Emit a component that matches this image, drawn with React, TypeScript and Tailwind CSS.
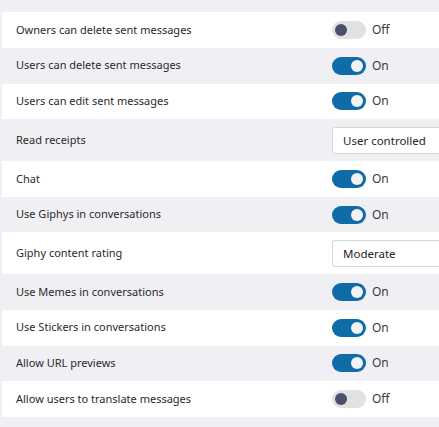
type Row =
  | { label: string; kind: 'toggle'; on: boolean }
  | { label: string; kind: 'select'; value: string }

const rows: Row[] = [
  { label: 'Owners can delete sent messages', kind: 'toggle', on: false },
  { label: 'Users can delete sent messages', kind: 'toggle', on: true },
  { label: 'Users can edit sent messages', kind: 'toggle', on: true },
  { label: 'Read receipts', kind: 'select', value: 'User controlled' },
  { label: 'Chat', kind: 'toggle', on: true },
  { label: 'Use Giphys in conversations', kind: 'toggle', on: true },
  { label: 'Giphy content rating', kind: 'select', value: 'Moderate' },
  { label: 'Use Memes in conversations', kind: 'toggle', on: true },
  { label: 'Use Stickers in conversations', kind: 'toggle', on: true },
  { label: 'Allow URL previews', kind: 'toggle', on: true },
  { label: 'Allow users to translate messages', kind: 'toggle', on: false },
]

function Toggle({ on }: { on: boolean }) {
  return (
    <div className="flex items-center">
      {on ? (
        <div className="flex h-[18px] w-[34px] items-center justify-end rounded-full bg-[#0f6ca9] px-[3px]">
          <div className="h-[12px] w-[12px] rounded-full bg-[#f3f3f5]" />
        </div>
      ) : (
        <div className="flex h-[18px] w-[34px] items-center justify-start rounded-full bg-[#e1e1e1] px-[3px]">
          <div className="h-[12px] w-[12px] rounded-full bg-[#4a5068]" />
        </div>
      )}
      <span className="ml-[6px] text-[12px] text-[#3b3a39]">{on ? 'On' : 'Off'}</span>
    </div>
  )
}

export default function App() {
  return (
    <div
      className="min-h-[427px] w-[439px] overflow-hidden bg-[#f0f0f4] pt-[12px] pl-[2px]"
      style={{ fontFamily: '"Noto Sans", "Open Sans", sans-serif' }}
    >
      {rows.map((row, i) => (
        <div
          key={row.label}
          className={`flex items-center ${i % 2 === 0 ? 'bg-white' : 'bg-[#f0f0f4]'} ${row.kind === 'select' ? 'h-[41.5px]' : 'h-[35.8px]'}`}
        >
          <div className="w-[330px] shrink-0 pl-[14px] text-[11px] text-[#2b2a2a]">{row.label}</div>
          {row.kind === 'toggle' ? (
            <Toggle on={row.on} />
          ) : (
            <div className="flex h-[27px] w-[130px] shrink-0 items-center rounded-[3px] border border-[#d6d6d6] bg-white pl-[10px] text-[11.5px] text-[#252424]">
              {row.value}
            </div>
          )}
        </div>
      ))}
    </div>
  )
}
